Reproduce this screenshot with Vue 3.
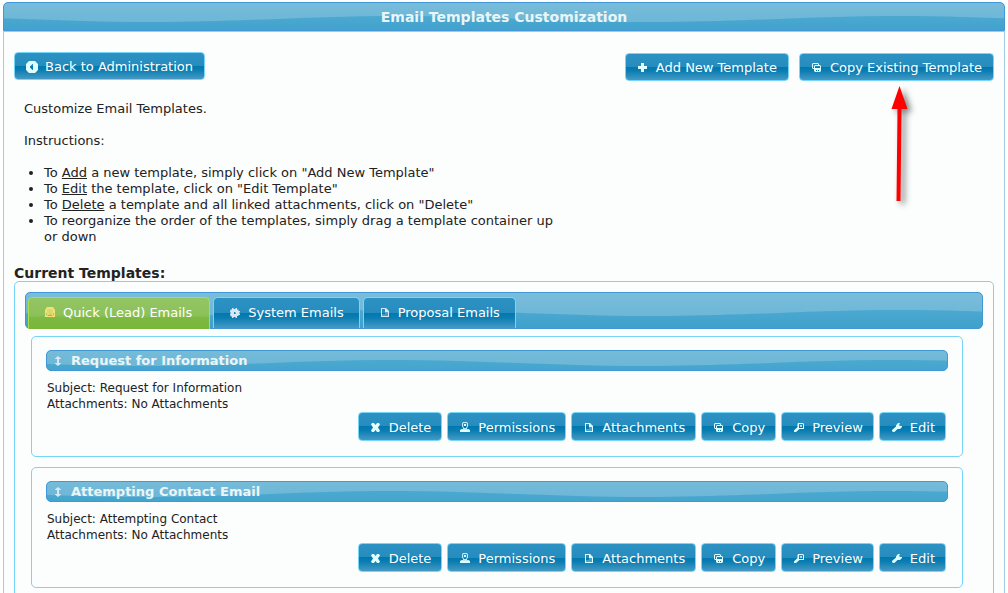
<script setup>
import { ref } from 'vue'

const icons = {
  back: '<path fill-rule="evenodd" d="M5 2h6l3 3v6l-3 3H5l-3-3V5zM9 5v6H8.500L6 8.500v-1L8.500 5z"/>',
  plus: '<path d="M6 3h3v3h3v3H9v3H6V9H3V6h3z"/>',
  copy: '<path fill-rule="evenodd" d="M4 3h5l1 1v1H9V4H4v4h1v1H4L3 8V4z"/><path fill-rule="evenodd" d="M6 5h5l1 1v5l-1 1H6l-1-1V6zM6 6v2h5V6z"/><path fill="#0078ae" d="M7 10h1v1H7zM9 10h1v1H9z"/>',
  close: '<path d="M4 3h2l1.500 2L9 3h2l1 1.500L10 7.500l2 3-1 1.500H9l-1.500-2L6 12H4l-1-1.500 2-3-2-3z"/>',
  person: '<path fill-rule="evenodd" d="M6 2h4l1 1.500v3L10 8v1h2l1 1.500V12H3v-1.500L4 9h2V8L5 6.500v-3zM6.500 3L6 4v2l1 2h2l1-2V4l-.5-1z" opacity=".85"/><path d="M7 4h2v2H7zM3 10h10v2H3z"/>',
  document: '<path fill-rule="evenodd" d="M4 3h5l3 3v6H4zM5 4v7h6V7H8V4z"/><path d="M8 7h3v4H5V9h3z" opacity=".3"/>',
  search: '<path fill-rule="evenodd" d="M7 3h5l1 1v5H8.500L5 12H3v-1.500L6.500 7V4zM8 4v4h4V4z"/><path d="M9 5h2v2H9z" opacity=".7"/>',
  wrench: '<path d="M10 3h1L10 5l1 1h2v1l-2 2H8.500L6 11.500 5 12H4l-1-1v-1l4-3.500V5.500L9 3z"/>',
  mail: '<path fill-rule="evenodd" d="M5 2h6l2 3v7H3V5zM5 4v3l2 1.500h2L11 7V4zM4 8v2.500L5.500 9zM12 8v2.500L10.500 9zM5 11h6L9 9.500H7z"/><path d="M5 4h6v3L9 8.500H7L5 7z" opacity=".75"/>',
  gear: '<path fill-rule="evenodd" d="M5 3h1.500v1h2V3H10v1.500h1.500V6H13v1.500h-1v1h1V10h-1.500v1H10v2H8.500v-1h-2v1H5v-1.500H3.500V10H3V8.500h1v-1H3V6h.5V4.500H5zM7 7v2h1.500V7z"/>',
  updown: '<path d="M8 3l3 2.500V6H9v4h2v.5L8 13l-3-2.500V10h2V6H5v-.5z"/>'
}

const tabs = [
  { label: 'Quick (Lead) Emails', icon: 'mail' },
  { label: 'System Emails', icon: 'gear' },
  { label: 'Proposal Emails', icon: 'document' }
]
const current = ref(0)

const actions = [
  { label: 'Delete', icon: 'close' },
  { label: 'Permissions', icon: 'person' },
  { label: 'Attachments', icon: 'document' },
  { label: 'Copy', icon: 'copy' },
  { label: 'Preview', icon: 'search' },
  { label: 'Edit', icon: 'wrench' }
]

const templates = [
  { title: 'Request for Information', subject: 'Request for Information' },
  { title: 'Attempting Contact Email', subject: 'Attempting Contact' }
]
</script>

<template>
  <main class="panel">
    <h1 class="panel-title wave">Email Templates Customization</h1>
    <div class="panel-body">
      <div class="toolbar">
        <button type="button" class="btn"><svg class="icon" viewBox="0 0 16 16" v-html="icons.back"></svg>Back to Administration</button>
        <div class="toolbar-right">
          <button type="button" class="btn"><svg class="icon" viewBox="0 0 16 16" v-html="icons.plus"></svg>Add New Template</button>
          <div class="pointed">
            <button type="button" class="btn"><svg class="icon" viewBox="0 0 16 16" v-html="icons.copy"></svg>Copy Existing Template</button>
            <svg class="arrow" width="30" height="124" viewBox="0 0 30 124" aria-hidden="true">
              <path d="M13.500 0L21.500 23H15.500L14.500 115H10.500L11.500 23H5.500z" fill="#fe0000" />
            </svg>
          </div>
        </div>
      </div>

      <div class="intro">
        <p>Customize Email Templates.</p>
        <p>Instructions:</p>
        <ul>
          <li>To <u>Add</u> a new template, simply click on "Add New Template"</li>
          <li>To <u>Edit</u> the template, click on "Edit Template"</li>
          <li>To <u>Delete</u> a template and all linked attachments, click on "Delete"</li>
          <li>To reorganize the order of the templates, simply drag a template container up or down</li>
        </ul>
      </div>

      <h2>Current Templates:</h2>
      <section class="templates">
        <div class="tabs wave" role="tablist">
          <button
            v-for="(tab, i) in tabs"
            :key="tab.label"
            type="button"
            role="tab"
            class="tab"
            :class="{ active: i === current }"
            :aria-selected="i === current"
            @click="current = i"
          ><svg class="icon" viewBox="0 0 16 16" v-html="icons[tab.icon]"></svg>{{ tab.label }}</button>
        </div>
        <div class="cards">
          <article v-for="t in templates" :key="t.title" class="card">
            <h3 class="card-title wave"><svg class="icon" viewBox="0 0 16 16" v-html="icons.updown"></svg>{{ t.title }}</h3>
            <div class="details">
              <div>Subject: {{ t.subject }}</div>
              <div>Attachments: No Attachments</div>
            </div>
            <div class="actions">
              <button v-for="a in actions" :key="a.label" type="button" class="btn"><svg class="icon" viewBox="0 0 16 16" v-html="icons[a.icon]"></svg>{{ a.label }}</button>
            </div>
          </article>
        </div>
      </section>
    </div>
  </main>
</template>

<style>
html, body { background: #fff; }
</style>

<style scoped>
* { box-sizing: border-box; }
.panel {
  height: 100vh;
  overflow: hidden;
  padding: 2px 3px 0;
  font: 13px/16px Verdana, "DejaVu Sans", sans-serif;
  color: #222;
}
h1, h2, h3, p, ul { margin: 0; }
.wave {
  border: 1px solid #4297d7;
  color: #eaf5f7;
  background: #49a7cf url("data:image/svg+xml,%3Csvg xmlns='http://www.w3.org/2000/svg' width='500' height='100'%3E%3Cdefs%3E%3ClinearGradient id='a' gradientUnits='userSpaceOnUse' x1='0' x2='0' y1='30' y2='60'%3E%3Cstop offset='0' stop-color='%237bbedb'/%3E%3Cstop offset='1' stop-color='%236ab5d6'/%3E%3C/linearGradient%3E%3ClinearGradient id='b' x2='0' y2='1'%3E%3Cstop offset='.5' stop-color='%234ba9d0'/%3E%3Cstop offset='.7' stop-color='%233c9fcb'/%3E%3C/linearGradient%3E%3C/defs%3E%3Crect width='500' height='100' fill='url(%23b)'/%3E%3Cpath fill='url(%23a)' d='M-104 0V55C-13 55 55 49 146 49S305 55 396 55S555 49 646 49V0Z'/%3E%3C/svg%3E") 50% 50% repeat-x;
}
.panel-title {
  height: 29px;
  border-radius: 5px 5px 0 0;
  font-size: 14px;
  line-height: 28px;
  text-align: center;
}
.panel-body {
  border: 1px solid #a6c9e2;
  background: #fcfdfd;
  padding: 20px 10px 40px;
  min-height: 100vh;
}
.toolbar, .toolbar-right { display: flex; justify-content: space-between; align-items: flex-start; }
.toolbar-right { gap: 10px; padding-top: 1px; }
.pointed { position: relative; }
.arrow {
  position: absolute;
  top: 33px;
  right: 78px;
  filter: drop-shadow(4px 3px 3px rgba(0, 0, 0, 0.5));
}
.btn, .tab {
  display: inline-flex;
  align-items: center;
  gap: 5px;
  border: 1px solid #77d5f7;
  color: #fff;
  font: inherit;
  white-space: nowrap;
  background: linear-gradient(#2d92c3, #268cbe 50%, #0078ae 50%, #0a7db2 65%, #459ac4);
}
.btn { height: 28px; padding: 2px 11px 0 9px; border-radius: 4px; }
.icon { width: 16px; height: 16px; flex: none; fill: #e0fdff; }
.intro { max-width: 554px; padding: 20px 0 0 10px; }
.intro p { margin-bottom: 16px; }
.intro ul { padding-left: 20px; }
h2 { margin-top: 20px; font-size: 14px; line-height: 16px; }
.templates {
  border: 1px solid #77d5f7;
  border-radius: 5px;
  padding: 10px;
}
.tabs {
  display: flex;
  align-items: flex-start;
  gap: 3px;
  height: 37px;
  padding: 4px 2px 0;
  border-radius: 5px;
}
.tab {
  height: 31px;
  padding: 0 15px 0 13px;
  border-bottom: 0;
  border-radius: 5px 5px 0 0;
}
.tab .icon { fill: #d8e7f3; }
.tab.active {
  height: 32px;
  padding: 0 17px 1px 13px;
  border-color: #acdd4a;
  background: linear-gradient(#94c565, #8cc158 55%, #7db841 65%, #7ab53b);
}
.tab.active .icon { fill: #f5e175; }
.cards { padding: 7px 20px 0 6px; display: grid; gap: 10px; }
.card {
  border: 1px solid #77d5f7;
  border-radius: 5px;
  padding: 13px 14px 15px;
}
.card-title {
  display: flex;
  align-items: center;
  gap: 5px;
  height: 21px;
  padding-left: 3px;
  border-radius: 5px;
  font-size: 13px;
}
.card-title .icon { fill: #d8e7f3; }
.details { margin-top: 9px; padding-left: 1px; font-size: 12px; }
.actions { display: flex; flex-wrap: wrap; justify-content: flex-end; gap: 5px; padding-right: 2px; }
.actions .btn { height: 29px; padding-right: 10px; }
</style>
